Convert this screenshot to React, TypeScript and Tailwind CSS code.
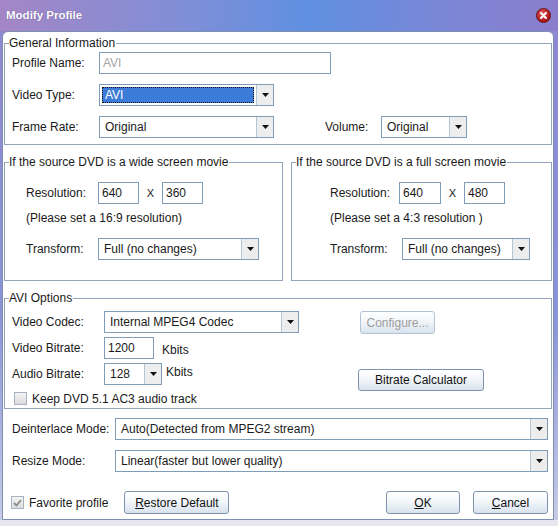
import React from 'react';

const font = { fontFamily: '"Liberation Sans", Arial, sans-serif' };

function Arrow() {
  return (
    <div className="flex h-full w-[17px] items-center justify-center border-l border-[#b9c4d3] bg-[#ededed]">
      <svg width="7" height="4" viewBox="0 0 7 4">
        <path d="M0 0h7L3.5 4z" fill="#111" />
      </svg>
    </div>
  );
}

function Combo({ value, w, selected }: { value: string; w: string; selected?: boolean }) {
  return (
    <div className={`flex h-[22px] ${w} shrink-0 border border-[#7f9db9] bg-white`}>
      <div className="flex flex-1 items-center overflow-hidden p-[2px]">
        {selected ? (
          <div className="flex h-full w-full items-center border border-dotted border-[#111] bg-[#3d7bd8] pl-[2px] text-white">
            {value}
          </div>
        ) : (
          <span className="pl-[3px] whitespace-nowrap">{value}</span>
        )}
      </div>
      <Arrow />
    </div>
  );
}

function Field({ value, w, muted }: { value: string; w: string; muted?: boolean }) {
  return (
    <div
      className={`flex h-[22px] ${w} shrink-0 items-center border border-[#7f9db9] bg-white pl-[3px] ${
        muted ? 'text-[#a6a6a6]' : ''
      }`}
    >
      {value}
    </div>
  );
}

function Btn({ children, w, disabled, h = 'h-[23px]' }: { children: React.ReactNode; w: string; disabled?: boolean; h?: string }) {
  return (
    <div
      className={`flex ${h} ${w} shrink-0 items-center justify-center rounded-[3px] border bg-[linear-gradient(to_bottom,#ffffff,#f3f6fa_45%,#d8e2ee)] ${
        disabled ? 'border-[#b4c2d4] text-[#9c9c9c]' : 'border-[#7f93ae] text-[#111]'
      }`}
    >
      {children}
    </div>
  );
}

function Check({ checked }: { checked?: boolean }) {
  return (
    <div className="flex h-[13px] w-[13px] shrink-0 items-center justify-center border border-[#a9b3c0] bg-[linear-gradient(to_bottom,#f4f4f4,#dcdcdc)]">
      {checked && (
        <svg width="9" height="8" viewBox="0 0 9 8">
          <path d="M1 4l2.5 2.5L8 1" stroke="#8a8a8a" strokeWidth="1.8" fill="none" />
        </svg>
      )}
    </div>
  );
}

function Legend({ children }: { children: React.ReactNode }) {
  return <legend className="ml-[4px] pr-[1px] leading-[14px]">{children}</legend>;
}

export default function App() {
  return (
    <div
      className="flex h-[526px] w-[558px] flex-col bg-[linear-gradient(to_bottom,#8f86d2,#8a94d8_60%,#c9cde6)] text-[12px] text-[#1a1a1a]"
      style={font}
    >
      {/* title bar */}
      <div className="flex h-[31px] shrink-0 items-center justify-between bg-[linear-gradient(to_right,#a486c6,#7d8fd8_35%,#5f8fe0_55%,#7b86d6_80%,#8a7dcc)] pl-[6px] pr-[7px]">
        <span className="text-[11.5px] font-bold text-white [text-shadow:0_0_1px_#5a4a8a]">Modify Profile</span>
        <div className="flex h-[15px] w-[15px] items-center justify-center rounded-full border border-[#6b1010] bg-[radial-gradient(circle_at_40%_35%,#e06060,#b41c1c_60%,#8a1010)]">
          <svg width="7" height="7" viewBox="0 0 7 7">
            <path d="M1 1l5 5M6 1L1 6" stroke="#fff" strokeWidth="2" strokeLinecap="round" />
          </svg>
        </div>
      </div>

      {/* body */}
      <div className="ml-[2px] mr-[4px] flex flex-1 flex-col rounded-t-[6px] border border-[#7d8fb0] bg-white px-[1px]">
        {/* General Information */}
        <fieldset className="mt-[4px] border border-[#91a4b9]">
          <Legend>General Information</Legend>
          <div className="flex flex-col gap-[10px] pb-[6px] pl-[7px] pt-[2px]">
            <div className="flex items-center">
              <span className="w-[87px]">Profile Name:</span>
              <Field value="AVI" w="w-[232px]" muted />
            </div>
            <div className="flex items-center">
              <span className="w-[87px]">Video Type:</span>
              <Combo value="AVI" w="w-[175px]" selected />
            </div>
            <div className="flex items-center">
              <span className="w-[87px]">Frame Rate:</span>
              <Combo value="Original" w="w-[175px]" />
              <span className="ml-[51px] w-[56px]">Volume:</span>
              <Combo value="Original" w="w-[86px]" />
            </div>
          </div>
        </fieldset>

        {/* wide / full */}
        <div className="mt-[10px] flex gap-[8px]">
          <fieldset className="w-[279px] border border-[#91a4b9]">
            <Legend>If the source DVD is a wide screen movie</Legend>
            <div className="pb-[20px] pl-[21px] pt-[13px]">
              <div className="flex items-center">
                <span className="w-[72px]">Resolution:</span>
                <Field value="640" w="w-[41px]" />
                <span className="w-[23px] text-center text-[11px]">X</span>
                <Field value="360" w="w-[41px]" />
              </div>
              <div className="mt-[7px] leading-[14px]">(Please set a 16:9 resolution)</div>
              <div className="mt-[13px] flex items-center">
                <span className="w-[72px]">Transform:</span>
                <Combo value="Full (no changes)" w="w-[161px]" />
              </div>
            </div>
          </fieldset>
          <fieldset className="flex-1 border border-[#91a4b9]">
            <Legend>If the source DVD is a full screen movie</Legend>
            <div className="pb-[20px] pl-[38px] pt-[13px]">
              <div className="flex items-center">
                <span className="w-[69px]">Resolution:</span>
                <Field value="640" w="w-[42px]" />
                <span className="w-[23px] text-center text-[11px]">X</span>
                <Field value="480" w="w-[41px]" />
              </div>
              <div className="mt-[7px] leading-[14px]">(Please set a 4:3 resolution )</div>
              <div className="mt-[13px] flex items-center">
                <span className="w-[72px]">Transform:</span>
                <Combo value="Full (no changes)" w="w-[128px]" />
              </div>
            </div>
          </fieldset>
        </div>

        {/* AVI options */}
        <fieldset className="mt-[10px] border border-[#91a4b9]">
          <Legend>AVI Options</Legend>
          <div className="flex pb-[2px] pl-[7px] pt-[6px]">
            <div className="flex w-[348px] flex-col gap-[4px]">
              <div className="flex items-center">
                <span className="w-[92px]">Video Codec:</span>
                <Combo value="Internal MPEG4 Codec" w="w-[195px]" />
              </div>
              <div className="flex items-center">
                <span className="w-[92px]">Video Bitrate:</span>
                <Field value="1200" w="w-[50px]" />
                <span className="ml-[8px] mt-[4px]">Kbits</span>
              </div>
              <div className="flex items-center">
                <span className="w-[92px]">Audio Bitrate:</span>
                <Combo value="128" w="w-[58px]" />
                <span className="ml-[4px] -mt-[4px]">Kbits</span>
              </div>
              <div className="ml-[2px] mt-[2px] flex h-[15px] items-center gap-[5px]">
                <Check />
                <span>Keep DVD 5.1 AC3 audio track</span>
              </div>
            </div>
            <div className="flex flex-col">
              <Btn w="w-[75px]" disabled>Configure...</Btn>
              <div className="-ml-[2px] mt-[35px]">
                <Btn w="w-[126px]" h="h-[22px]">Bitrate Calculator</Btn>
              </div>
            </div>
          </div>
        </fieldset>

        {/* modes */}
        <div className="mt-[9px] flex flex-col gap-[10px] pl-[8px]">
          <div className="flex items-center">
            <span className="w-[103px]">Deinterlace Mode:</span>
            <Combo value="Auto(Detected from MPEG2 stream)" w="w-[433px]" />
          </div>
          <div className="flex items-center">
            <span className="w-[103px]">Resize Mode:</span>
            <Combo value="Linear(faster but lower quality)" w="w-[433px]" />
          </div>
        </div>

        {/* bottom row */}
        <div className="mt-[19px] flex items-center pl-[7px]">
          <div className="flex items-center gap-[5px]">
            <Check checked />
            <span>Favorite profile</span>
          </div>
          <div className="ml-[16px]">
            <Btn w="w-[105px]">
              <span>
                <span className="underline">R</span>estore Default
              </span>
            </Btn>
          </div>
          <div className="ml-auto flex gap-[13px] pr-[4px]">
            <Btn w="w-[74px]">
              <span className="underline">O</span>K
            </Btn>
            <Btn w="w-[75px]">
              <span>
                <span className="underline">C</span>ancel
              </span>
            </Btn>
          </div>
        </div>
      </div>
      <div className="h-[6px] shrink-0 bg-[#e6e7ef]" />
    </div>
  );
}
